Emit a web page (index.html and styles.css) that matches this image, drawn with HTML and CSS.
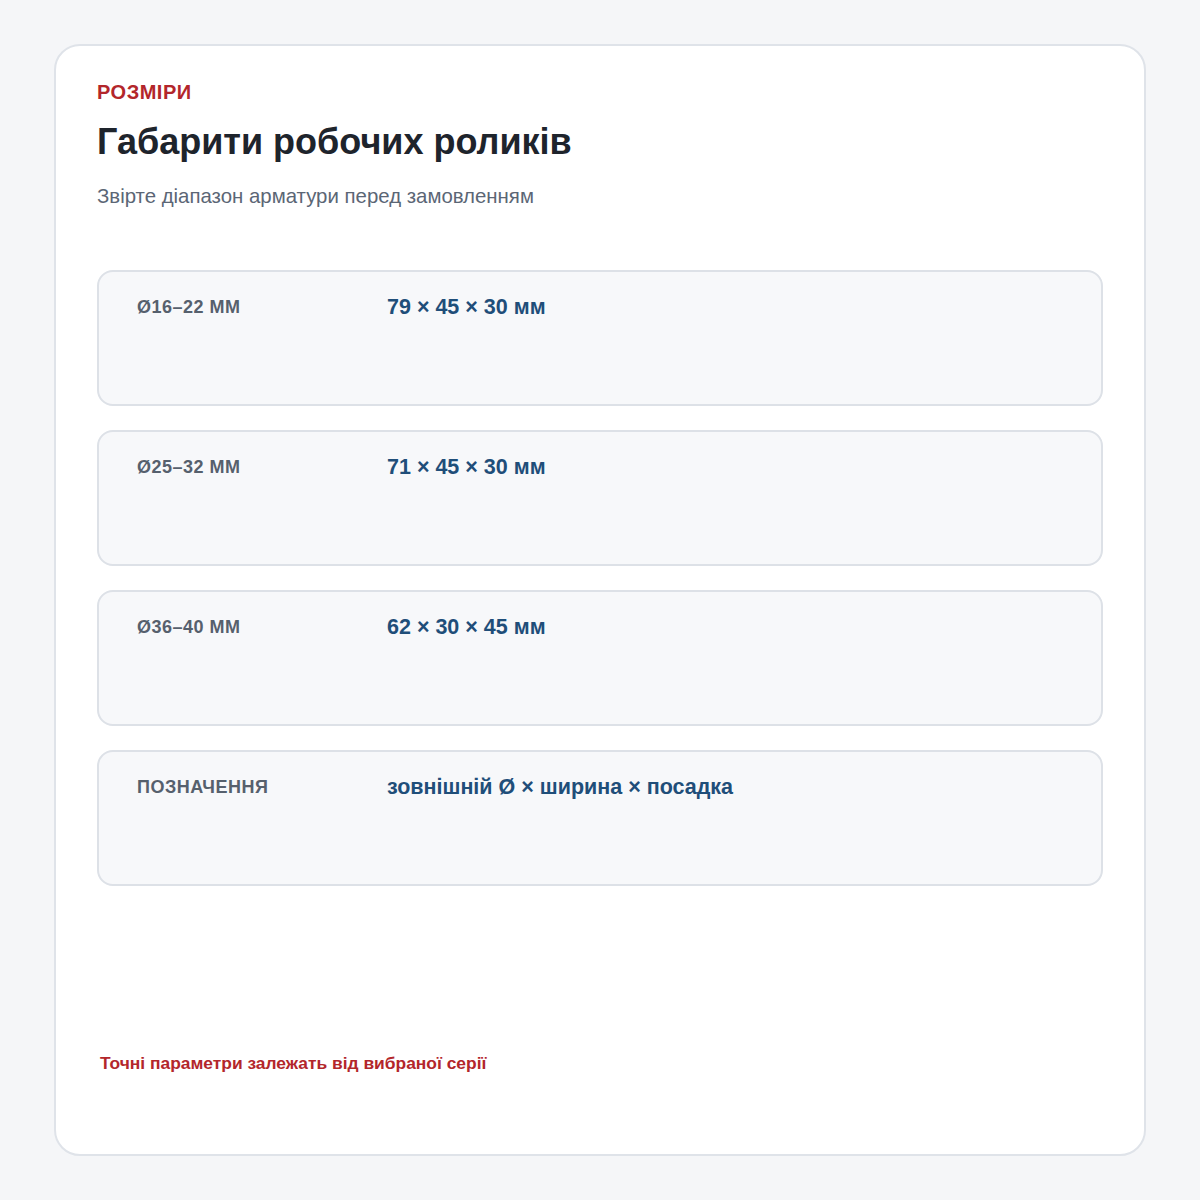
FILE: index.html
```html
<!DOCTYPE html>
<html lang="uk">
<head>
    <meta charset="UTF-8">
    <meta name="viewport" content="width=device-width, initial-scale=1.0">
    <title>Габарити робочих роликів</title>
    <link rel="stylesheet" href="styles.css">
</head>
<body>
    <div class="card">
        <div class="eyebrow">РОЗМІРИ</div>
        <h1 class="title">Габарити робочих роликів</h1>
        <p class="subtitle">Звірте діапазон арматури перед замовленням</p>

        <div class="rows">
            <div class="row">
                <div class="label">Ø16–22 мм</div>
                <div class="value">79 × 45 × 30 мм</div>
            </div>
            <div class="row">
                <div class="label">Ø25–32 мм</div>
                <div class="value">71 × 45 × 30 мм</div>
            </div>
            <div class="row">
                <div class="label">Ø36–40 мм</div>
                <div class="value">62 × 30 × 45 мм</div>
            </div>
            <div class="row">
                <div class="label">Позначення</div>
                <div class="value">зовнішній Ø × ширина × посадка</div>
            </div>
        </div>

        <div class="note">Точні параметри залежать від вибраної серії</div>
    </div>
</body>
</html>
```

FILE: styles.css
```css
* {
    box-sizing: border-box;
}

body {
    margin: 0;
    padding: 44px 54px;
    background-color: #f5f6f8;
    font-family: 'Liberation Sans', Arial, sans-serif;
}

.card {
    display: flex;
    flex-direction: column;
    height: 1112px;
    padding: 34px 41px 80px;
    background-color: #ffffff;
    border: 2px solid #dfe3e9;
    border-radius: 26px;
}

.eyebrow {
    color: #b3262b;
    font-size: 20px;
    font-weight: bold;
    letter-spacing: 0.5px;
    line-height: 24px;
    text-transform: uppercase;
}

.title {
    margin: 16px 0 0;
    color: #1e242c;
    font-size: 36px;
    font-weight: bold;
    line-height: 44px;
}

.subtitle {
    margin: 20px 0 0;
    color: #5b6675;
    font-size: 20.4px;
    line-height: 24px;
}

.rows {
    display: flex;
    flex-direction: column;
    gap: 24px;
    margin-top: 62px;
}

.row {
    display: flex;
    align-items: flex-start;
    height: 136px;
    padding: 23px 38px;
    background-color: #f7f8fa;
    border: 2px solid #dde1e7;
    border-radius: 16px;
}

.label {
    width: 250px;
    flex-shrink: 0;
    margin-top: 2px;
    color: #56606d;
    font-size: 18px;
    font-weight: bold;
    letter-spacing: 0.5px;
    text-transform: uppercase;
}

.value {
    color: #1f4e79;
    font-size: 21.5px;
    font-weight: bold;
}

.note {
    margin-top: auto;
    padding-left: 3px;
    color: #b3262b;
    font-size: 17.4px;
    font-weight: bold;
}
```
